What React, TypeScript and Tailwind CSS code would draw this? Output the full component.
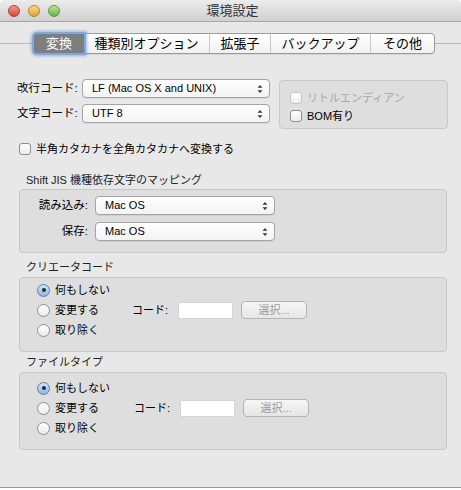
import React from 'react';

const font = "font-['Liberation_Sans','Noto_Sans_CJK_JP',sans-serif]";

function Arrows() {
  return (
    <svg width="6" height="10" viewBox="0 0 6 10" className="shrink-0">
      <path d="M0.5 3.8 L3 1 L5.5 3.8 Z" fill="#3a3a3a" />
      <path d="M0.5 6.2 L3 9 L5.5 6.2 Z" fill="#3a3a3a" />
    </svg>
  );
}

function Popup({ value, w }: { value: string; w: string }) {
  return (
    <div className={`flex items-center h-[19px] ${w} rounded-[4px] border border-[#a4a4a4] bg-gradient-to-b from-white to-[#f3f3f3] shadow-[0_1px_0_rgba(0,0,0,0.06)] pl-[9px] pr-[6px] text-[11px] text-black`}>
      <span className="flex-1 leading-none">{value}</span>
      <Arrows />
    </div>
  );
}

function Checkbox({ label, disabled = false }: { label: string; disabled?: boolean }) {
  return (
    <div className="flex items-center gap-[5px]">
      <div
        className={`w-[12px] h-[12px] shrink-0 rounded-[3px] border bg-gradient-to-b from-white to-[#ececec] ${
          disabled ? 'border-[#c4c4c4]' : 'border-[#8e8e8e]'
        }`}
      />
      <span className={`text-[11px] leading-none whitespace-nowrap ${disabled ? 'text-[#a8a8a8]' : 'text-black'}`}>{label}</span>
    </div>
  );
}

function Radio({ label, checked = false }: { label: string; checked?: boolean }) {
  return (
    <div className="flex items-center gap-[5px] h-[20px]">
      {checked ? (
        <div className="w-[13px] h-[13px] rounded-full border border-[#5a7fb0] bg-gradient-to-b from-[#d6e6f7] to-[#8db4e2] flex items-center justify-center">
          <div className="w-[4px] h-[4px] rounded-full bg-[#1e2b3c]" />
        </div>
      ) : (
        <div className="w-[13px] h-[13px] rounded-full border border-[#8e8e8e] bg-gradient-to-b from-white to-[#ececec]" />
      )}
      <span className="text-[11px] leading-none text-black">{label}</span>
    </div>
  );
}

function Group({ title, pad, shift, pt }: { title: string; pad: string; shift: string; pt: string }) {
  return (
    <div>
      <div className="pl-[26px] text-[11px] leading-none text-[#222] h-[20px] flex items-center">{title}</div>
      <div className={`ml-[19px] w-[428px] rounded-[4px] border border-[#c8c8c8] bg-[#dedede] ${pt} pb-[11px]`}>
        <div className={`flex items-center ${pad}`}>
          <div className="flex flex-col w-[95px]">
            <Radio label="何もしない" checked />
            <Radio label="変更する" />
            <Radio label="取り除く" />
          </div>
          <div className={`flex items-center ${shift}`}>
            <span className="text-[11px] leading-none w-[46px]">コード:</span>
            <div className="w-[55px] h-[17px] bg-white border border-[#d4d4d4]" />
            <div className="ml-[8px] w-[66px] h-[18px] rounded-[4px] border border-[#b4b4b4] bg-gradient-to-b from-[#f6f6f6] to-[#e6e6e6] flex items-center justify-center text-[11px] leading-none text-[#9a9a9a]">
              選択...
            </div>
          </div>
        </div>
      </div>
    </div>
  );
}

export default function App() {
  const tabs = [
    { label: '変換', w: 'w-[50px]' },
    { label: '種類別オプション', w: 'w-[125px]' },
    { label: '拡張子', w: 'w-[61px]' },
    { label: 'バックアップ', w: 'w-[100px]' },
    { label: 'その他', w: 'w-[64px]' },
  ];

  return (
    <div className={`w-[461px] h-[490px] bg-white ${font}`}>
      <div className="w-[461px] h-[488px] bg-[#e8e8e8] rounded-t-[5px] overflow-hidden border-b border-[#9a9a9a] flex flex-col">
        {/* title bar */}
        <div className="h-[22px] shrink-0 flex items-center bg-gradient-to-b from-[#ececec] to-[#d0d0d0] border-b border-[#a6a6a6]">
          <div className="flex items-center gap-[8px] pl-[8px]">
            <div className="w-[12px] h-[12px] rounded-full border border-[#b03a36] bg-gradient-to-b from-[#f4968f] to-[#d9413a]" />
            <div className="w-[12px] h-[12px] rounded-full border border-[#b1862c] bg-gradient-to-b from-[#fbd888] to-[#e1a530]" />
            <div className="w-[12px] h-[12px] rounded-full border border-[#5d963b] bg-gradient-to-b from-[#bce59a] to-[#67b24a]" />
          </div>
          <div className="flex-1 text-center text-[13px] leading-none text-[#333] pr-[56px]">環境設定</div>
        </div>

        {/* tab segmented control */}
        <div className="mt-[11px] flex items-center">
          <div className="w-[33px] h-px bg-[#b8b8b8]" />
          <div className="flex h-[21px] rounded-[4px] border border-[#9a9a9a] bg-gradient-to-b from-white to-[#f1f1f1] shadow-[0_1px_0_rgba(0,0,0,0.08)]">
            {tabs.map((t, i) => (
              <div
                key={t.label}
                className={`${t.w} flex items-center justify-center text-[13px] leading-none ${
                  i === 0
                    ? 'bg-[#7e7e7e] text-white rounded-l-[3px] shadow-[0_0_0_2px_#7fa9dc,0_0_3px_3px_rgba(96,150,220,0.6)] z-10'
                    : 'text-black'
                } ${i > 1 ? 'border-l border-[#c8c8c8]' : ''}`}
              >
                {t.label}
              </div>
            ))}
          </div>
          <div className="flex-1 h-px bg-[#b8b8b8]" />
        </div>

        {/* encoding rows */}
        <div className="mt-[25px] flex">
          <div className="pl-[17px] flex flex-col gap-[6px]">
            <div className="flex items-center">
              <span className="w-[65px] text-[11.5px] leading-none">改行コード:</span>
              <Popup value="LF (Mac OS X and UNIX)" w="w-[188px]" />
            </div>
            <div className="flex items-center">
              <span className="w-[65px] text-[11.5px] leading-none">文字コード:</span>
              <Popup value="UTF 8" w="w-[188px]" />
            </div>
          </div>
          <div className="ml-[9px] mt-[1px] w-[169px] h-[49px] rounded-[4px] border border-[#c8c8c8] bg-[#dedede] pl-[10px] pt-[11px] flex flex-col gap-[6px]">
            <Checkbox label="リトルエンディアン" disabled />
            <Checkbox label="BOM有り" />
          </div>
        </div>

        <div className="mt-[14px] pl-[19px]">
          <Checkbox label="半角カタカナを全角カタカナへ変換する" />
        </div>

        {/* Shift JIS mapping */}
        <div className="mt-[18px]">
          <div className="pl-[26px] text-[11px] leading-none text-[#222] h-[14px] flex items-center">
            Shift JIS 機種依存文字のマッピング
          </div>
          <div className="mt-[2px] ml-[19px] w-[428px] h-[64px] rounded-[4px] border border-[#c8c8c8] bg-[#dedede] pt-[6px] flex flex-col gap-[7px]">
            <div className="flex items-center">
              <span className="w-[75px] text-right text-[11.5px] leading-none pr-[7px]">読み込み:</span>
              <Popup value="Mac OS" w="w-[180px]" />
            </div>
            <div className="flex items-center">
              <span className="w-[75px] text-right text-[11.5px] leading-none pr-[7px]">保存:</span>
              <Popup value="Mac OS" w="w-[180px]" />
            </div>
          </div>
        </div>

        <div className="mt-[4px]">
          <Group title="クリエータコード" pad="pl-[17px]" shift="" pt="pt-[2px]" />
        </div>
        <div>
          <Group title="ファイルタイプ" pad="pl-[17px]" shift="ml-[2px]" pt="pt-[5px]" />
        </div>
      </div>
    </div>
  );
}
